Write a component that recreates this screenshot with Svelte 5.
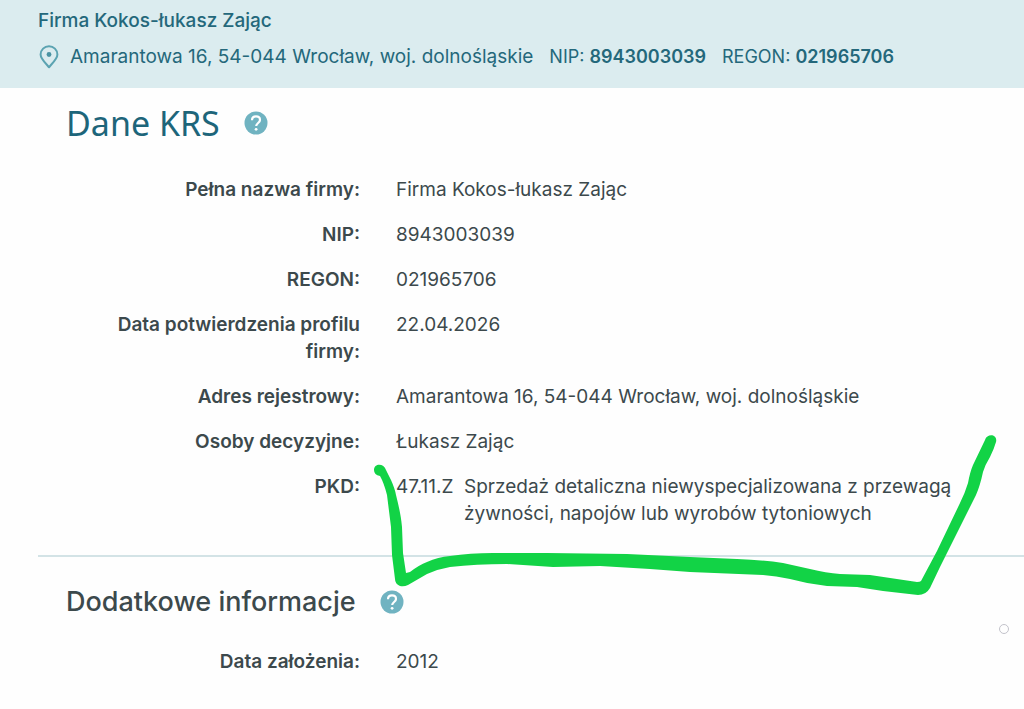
<script>
  const company = {
    name: 'Firma Kokos-łukasz Zając',
    address: 'Amarantowa 16, 54-044 Wrocław, woj. dolnośląskie',
    nip: '8943003039',
    regon: '021965706'
  };

  const registry = [
    ['Pełna nazwa firmy:', company.name],
    ['NIP:', company.nip],
    ['REGON:', company.regon],
    ['Data potwierdzenia profilu firmy:', '22.04.2026'],
    ['Adres rejestrowy:', company.address],
    ['Osoby decyzyjne:', 'Łukasz Zając']
  ];
</script>

{#snippet help(label)}
  <button class="help" type="button" aria-label={label}>
    <svg viewBox="0 0 24 24" aria-hidden="true">
      <circle cx="12" cy="12" r="11.5" fill="#70b3c1" />
      <path d="M8 9.300C8 6.800 9.700 5.400 12 5.400c2.300 0 4 1.400 4 3.500 0 3-3.800 3.200-3.800 6.200" fill="none" stroke="#fff" stroke-width="2.200" />
      <circle cx="12.100" cy="18.300" r="1.400" fill="#fff" />
    </svg>
  </button>
{/snippet}

<div class="page">
  <header>
    <strong class="name">{company.name}</strong>
    <div class="summary">
      <span class="address">
        <svg class="pin" viewBox="0 0 20 24" aria-hidden="true">
          <path d="M10 22.300C7.500 18.800 1.600 14.300 1.600 9.600a8.400 8.400 0 0 1 16.800 0C18.400 14.300 12.500 18.800 10 22.300Z" fill="none" stroke="#5ba3b1" stroke-width="2" stroke-linejoin="round" />
          <circle cx="10" cy="9.500" r="2.400" fill="#4b93a3" />
        </svg>
        {company.address}
      </span>
      <span class="number">NIP: <b>{company.nip}</b></span>
      <span class="number">REGON: <b>{company.regon}</b></span>
    </div>
  </header>

  <main>
    <section class="registry">
      <div class="heading">
        <h1>Dane KRS</h1>
        {@render help('Pomoc: Dane KRS')}
      </div>
      <dl>
        {#each registry as [label, value]}
          <dt>{label}</dt>
          <dd>{value}</dd>
        {/each}
        <dt>PKD:</dt>
        <dd class="pkd">
          <span>47.11.Z</span>
          <span>Sprzedaż detaliczna niewyspecjalizowana z przewagą żywności, napojów lub wyrobów tytoniowych</span>
        </dd>
      </dl>
    </section>

    <section class="extra">
      <div class="heading">
        <h2>Dodatkowe informacje</h2>
        {@render help('Pomoc: Dodatkowe informacje')}
      </div>
      <dl>
        <dt>Data założenia:</dt>
        <dd>2012</dd>
      </dl>
    </section>
  </main>

  <svg class="marker" viewBox="370 430 632 160" aria-hidden="true">
    <path
      fill="#12d346"
      d="M374 470C374 463 384 463 386 470L391 480Q395 489 396 495C399 507 401 516 402 527L403 553L406 573L410 572Q419 565 427 562Q438 557 450 556Q470 553 493 553L547 553L627 554L690 557L737 559Q762 560 783 563L810 569Q826 573 840 574L870 575L917 582Q920 582 921 581L937 551L960 503Q965 493 968 483Q970 472 973 465L985 440C987 433 998 434 996 442Q994 449 990 457Q985 465 983 472Q980 486 976 495L957 533L940 567L930 588Q926 595 918 595L883 591L857 587L827 586Q808 584 790 579Q776 576 763 575L690 572L650 569L600 566L553 567L507 564Q476 564 450 567Q438 569 427 574L408 585Q404 587 400 586Q395 584 395 579L392 555L391 527L387 495Q384 483 380 476Q374 475 374 470Z"
    />
  </svg>
  <span class="dot"></span>
</div>

<style>
  :global(body) {
    margin: 0;
    background: #fefefe;
  }

  .page {
    position: relative;
    overflow: hidden;
    font: 400 19px/27px Inter, "Open Sans", sans-serif;
    color: #3c494c;
  }

  header {
    padding: 7px 38px 18px;
    background: #dbecef;
    color: #24687b;
  }

  .name {
    display: block;
    margin-bottom: 9px;
    font-weight: 500;
  }

  .summary,
  .address {
    display: flex;
    align-items: center;
  }

  .summary {
    flex-wrap: wrap;
    gap: 0 16px;
  }

  .address {
    gap: 10px;
  }

  .number {
    font-size: 18px;
  }

  b {
    font-weight: 600;
  }

  .pin {
    flex: none;
    width: 22px;
    height: 24px;
  }

  section {
    padding: 0 66px;
  }

  .registry {
    padding-top: 12px;
  }

  .extra {
    margin-left: 38px;
    padding: 25px 66px 34px 28px;
    border-top: 2px solid #d3e3e6;
  }

  .heading {
    display: flex;
    align-items: center;
    gap: 24px;
  }

  h1,
  h2 {
    margin: 0;
  }

  h1 {
    font: 400 34px/46px "Noto Sans", sans-serif;
    color: #1d657a;
  }

  h2 {
    font-size: 27px;
    line-height: 40px;
    font-weight: 500;
  }

  .help {
    width: 24px;
    height: 24px;
    padding: 0;
    border: 0;
    background: none;
    cursor: pointer;
  }

  .help svg {
    display: block;
  }

  dl {
    display: grid;
    grid-template-columns: 294px 1fr;
    gap: 18px 36px;
    margin: 0;
  }

  .registry dl {
    padding: 30px 0 28px;
  }

  .extra dl {
    padding-top: 26px;
  }

  dt {
    font-weight: 600;
    text-align: right;
  }

  dd {
    margin: 0;
  }

  .pkd {
    display: grid;
    grid-template-columns: 58px 1fr;
    gap: 10px;
  }

  .marker {
    position: absolute;
    left: 370px;
    top: 430px;
    width: 632px;
    height: 160px;
    overflow: visible;
    pointer-events: none;
  }

  .dot {
    position: absolute;
    left: 999px;
    top: 624px;
    box-sizing: border-box;
    width: 10px;
    height: 10px;
    border: 1px solid #c3c3cb;
    border-radius: 50%;
  }
</style>
